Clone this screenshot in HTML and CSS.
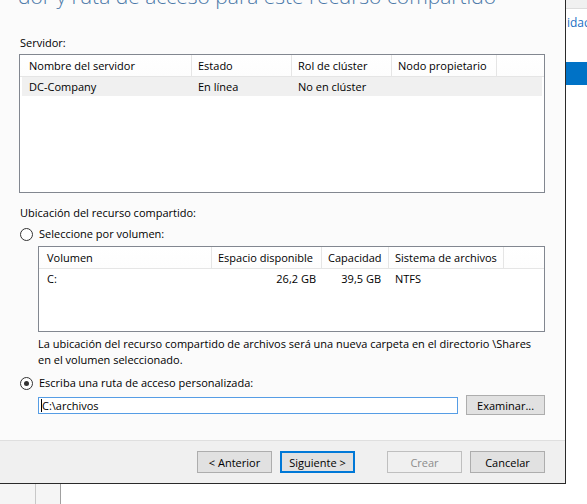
FILE: index.html
```html
<!DOCTYPE html>
<html lang="es">
<head>
<meta charset="utf-8">
<title>Asistente para nuevo recurso compartido</title>
<link rel="stylesheet" href="styles.css">
</head>
<body>
<div class="screen">
  <div class="top">
    <div class="dialog">
      <div class="content">
        <div class="heading">dor y ruta de acceso para este recurso compartido</div>
        <div class="label label-server">Servidor:</div>
        <div class="list server-list">
          <div class="row head srv-cols">
            <div class="cell first">Nombre del servidor</div>
            <div class="cell">Estado</div>
            <div class="cell">Rol de clúster</div>
            <div class="cell">Nodo propietario</div>
            <div class="cell last"></div>
          </div>
          <div class="row data selected srv-cols-data">
            <div class="cell first">DC-Company</div>
            <div class="cell">En línea</div>
            <div class="cell">No en clúster</div>
            <div class="cell"></div>
          </div>
        </div>
        <div class="label label-loc">Ubicación del recurso compartido:</div>
        <div class="radio-row radio-row-1">
          <span class="radio"></span>
          <span>Seleccione por volumen:</span>
        </div>
        <div class="list vol-list">
          <div class="row head vol-cols">
            <div class="cell first">Volumen</div>
            <div class="cell">Espacio disponible</div>
            <div class="cell">Capacidad</div>
            <div class="cell">Sistema de archivos</div>
            <div class="cell last"></div>
          </div>
          <div class="row data vol-cols vol-data">
            <div class="cell first">C:</div>
            <div class="cell num">26,2 GB</div>
            <div class="cell num">39,5 GB</div>
            <div class="cell">NTFS</div>
            <div class="cell"></div>
          </div>
        </div>
        <p class="desc">La ubicación del recurso compartido de archivos será una nueva carpeta en el directorio \Shares en el volumen seleccionado.</p>
        <div class="radio-row radio-row-2">
          <span class="radio checked"></span>
          <span>Escriba una ruta de acceso personalizada:</span>
        </div>
        <div class="path-row">
          <div class="textbox"><span class="caret"></span>C:\archivos</div>
          <div class="btn browse">Examinar...</div>
        </div>
      </div>
      <div class="footer">
        <div class="btn">&lt; Anterior</div>
        <div class="btn default">Siguiente &gt;</div>
        <div class="btn disabled gap-left">Crear</div>
        <div class="btn">Cancelar</div>
      </div>
    </div>
    <div class="side">
      <div class="side-strip"></div>
      <div class="side-link">idac</div>
      <div class="side-bar"></div>
    </div>
  </div>
  <div class="bottom">
    <div class="bcell b1"></div>
    <div class="bcell b2"></div>
    <div class="bcell b3"></div>
  </div>
</div>
</body>
</html>
```
FILE: styles.css
```css
html, body {
  margin: 0;
  padding: 0;
  width: 587px;
  height: 504px;
  overflow: hidden;
  background: #ffffff;
  font-family: "Open Sans", "Noto Sans", "Liberation Sans", sans-serif;
  font-size: 11px;
  color: #000;
}

.screen {
  display: flex;
  flex-direction: column;
  width: 587px;
  height: 504px;
}

.top {
  display: flex;
  height: 484px;
}

.dialog {
  width: 565px;
  height: 483px;
  border-right: 1px solid #2a2a2a;
  border-bottom: 1px solid #2a2a2a;
  background: #fbfbfb;
  display: flex;
  flex-direction: column;
  overflow: hidden;
}

.content {
  height: 440px;
  padding: 0 20px 0 19px;
  box-sizing: border-box;
  display: flex;
  flex-direction: column;
  overflow: hidden;
}

.heading {
  font-size: 21px;
  font-weight: 300;
  line-height: 30px;
  margin-top: -19px;
  margin-left: -1px;
  color: #4a78a8;
  white-space: nowrap;
}

.label {
  line-height: 16px;
  padding-left: 1px;
}

.label-server { margin-top: 24px; }
.label-loc { margin-top: 12px; }

.list {
  background: #ffffff;
  border: 1px solid #828790;
  box-sizing: border-box;
}

.server-list {
  margin-top: 3px;
  height: 139px;
}

.vol-list {
  margin-top: 4px;
  margin-left: 19px;
  height: 86px;
}

.row {
  display: grid;
  align-items: center;
  white-space: nowrap;
}

.row.head {
  height: 21px;
  border-bottom: 1px solid #e5e5e5;
  background: linear-gradient(#ffffff, #fdfdfd);
}

.row.head .cell {
  height: 100%;
  display: flex;
  align-items: center;
  border-right: 1px solid #e5e5e5;
  padding-left: 6px;
}

.row.head .cell.last { border-right: none; }

.row.data {
  height: 19px;
}

.row.data .cell {
  padding-left: 6px;
}

.srv-cols {
  grid-template-columns: 172px 100px 100px 105px 1fr;
}

.srv-cols .cell.first { padding-left: 9px; }

.srv-cols-data {
  grid-template-columns: 170px 100px 100px 105px 1fr;
  margin: 0 2px;
  background: #f0f0f0;
}

.srv-cols-data .cell.first { padding-left: 7px; }

.vol-cols {
  grid-template-columns: 173px 110px 67px 115px 1fr;
}

.vol-cols .cell.first { padding-left: 8px; }

.vol-data { height: 18px; }

.row.data .cell.num {
  text-align: right;
  padding-left: 0;
  padding-right: 6px;
}

.row.vol-cols.data .cell:nth-child(3) { padding-right: 8px; }

.radio-row {
  display: flex;
  align-items: center;
  gap: 6px;
  line-height: 16px;
  padding-left: 1px;
}

.radio-row-1 { margin-top: 5px; }
.radio-row-2 { margin-top: 7px; }

.radio {
  width: 11px;
  height: 11px;
  border: 1px solid #333333;
  border-radius: 50%;
  background: #ffffff;
  display: flex;
  align-items: center;
  justify-content: center;
  flex: none;
}

.radio.checked::after {
  content: "";
  width: 5px;
  height: 5px;
  border-radius: 50%;
  background: #333333;
}

.desc {
  margin: 4px 0 0 19px;
  line-height: 16px;
}

.path-row {
  margin-top: 4px;
  margin-left: 19px;
  display: flex;
  align-items: center;
  gap: 8px;
}

.textbox {
  width: 421px;
  height: 17px;
  box-sizing: border-box;
  border: 1px solid #569de5;
  background: #ffffff;
  display: flex;
  align-items: center;
  padding-left: 2px;
  line-height: 15px;
}

.caret {
  width: 1px;
  height: 13px;
  background: #000;
}

.btn {
  width: 75px;
  height: 22px;
  box-sizing: border-box;
  border: 1px solid #adadad;
  background: #e1e1e1;
  display: flex;
  align-items: center;
  justify-content: center;
  white-space: nowrap;
}

.btn.browse {
  width: 79px;
  height: 20px;
}

.btn.default {
  border: 2px solid #0078d7;
}

.btn.disabled {
  border-color: #bfbfbf;
  background: #f0f0f0;
  color: #8c8c8c;
}

.footer {
  flex: 1;
  border-top: 1px solid #dfdfdf;
  background: #f0f0f0;
  display: flex;
  justify-content: flex-end;
  align-items: flex-start;
  gap: 8px;
  padding: 10px 20px 0 0;
}

.gap-left { margin-left: 24px; }

.side {
  flex: 1;
  display: flex;
  flex-direction: column;
  background: #ffffff;
  overflow: hidden;
}

.side-strip {
  height: 8px;
  background: #f0f0f0;
  border-bottom: 1px solid #dcdcdc;
}

.side-link {
  margin-top: 6px;
  line-height: 16px;
  color: #1a6fc4;
  font-size: 12px;
  white-space: nowrap;
  padding-left: 1px;
}

.side-bar {
  margin-top: 31px;
  height: 23px;
  background: #0072c6;
}

.bottom {
  flex: 1;
  display: flex;
}

.bcell { height: 100%; }

.b1 {
  width: 35px;
  background: #f5f5f5;
  border-right: 1px solid #c8c8c8;
}

.b2 {
  width: 24px;
  background: #f5f5f5;
  border-right: 1px solid #a0a0a0;
}

.b3 {
  flex: 1;
  background: #ffffff;
}
```
